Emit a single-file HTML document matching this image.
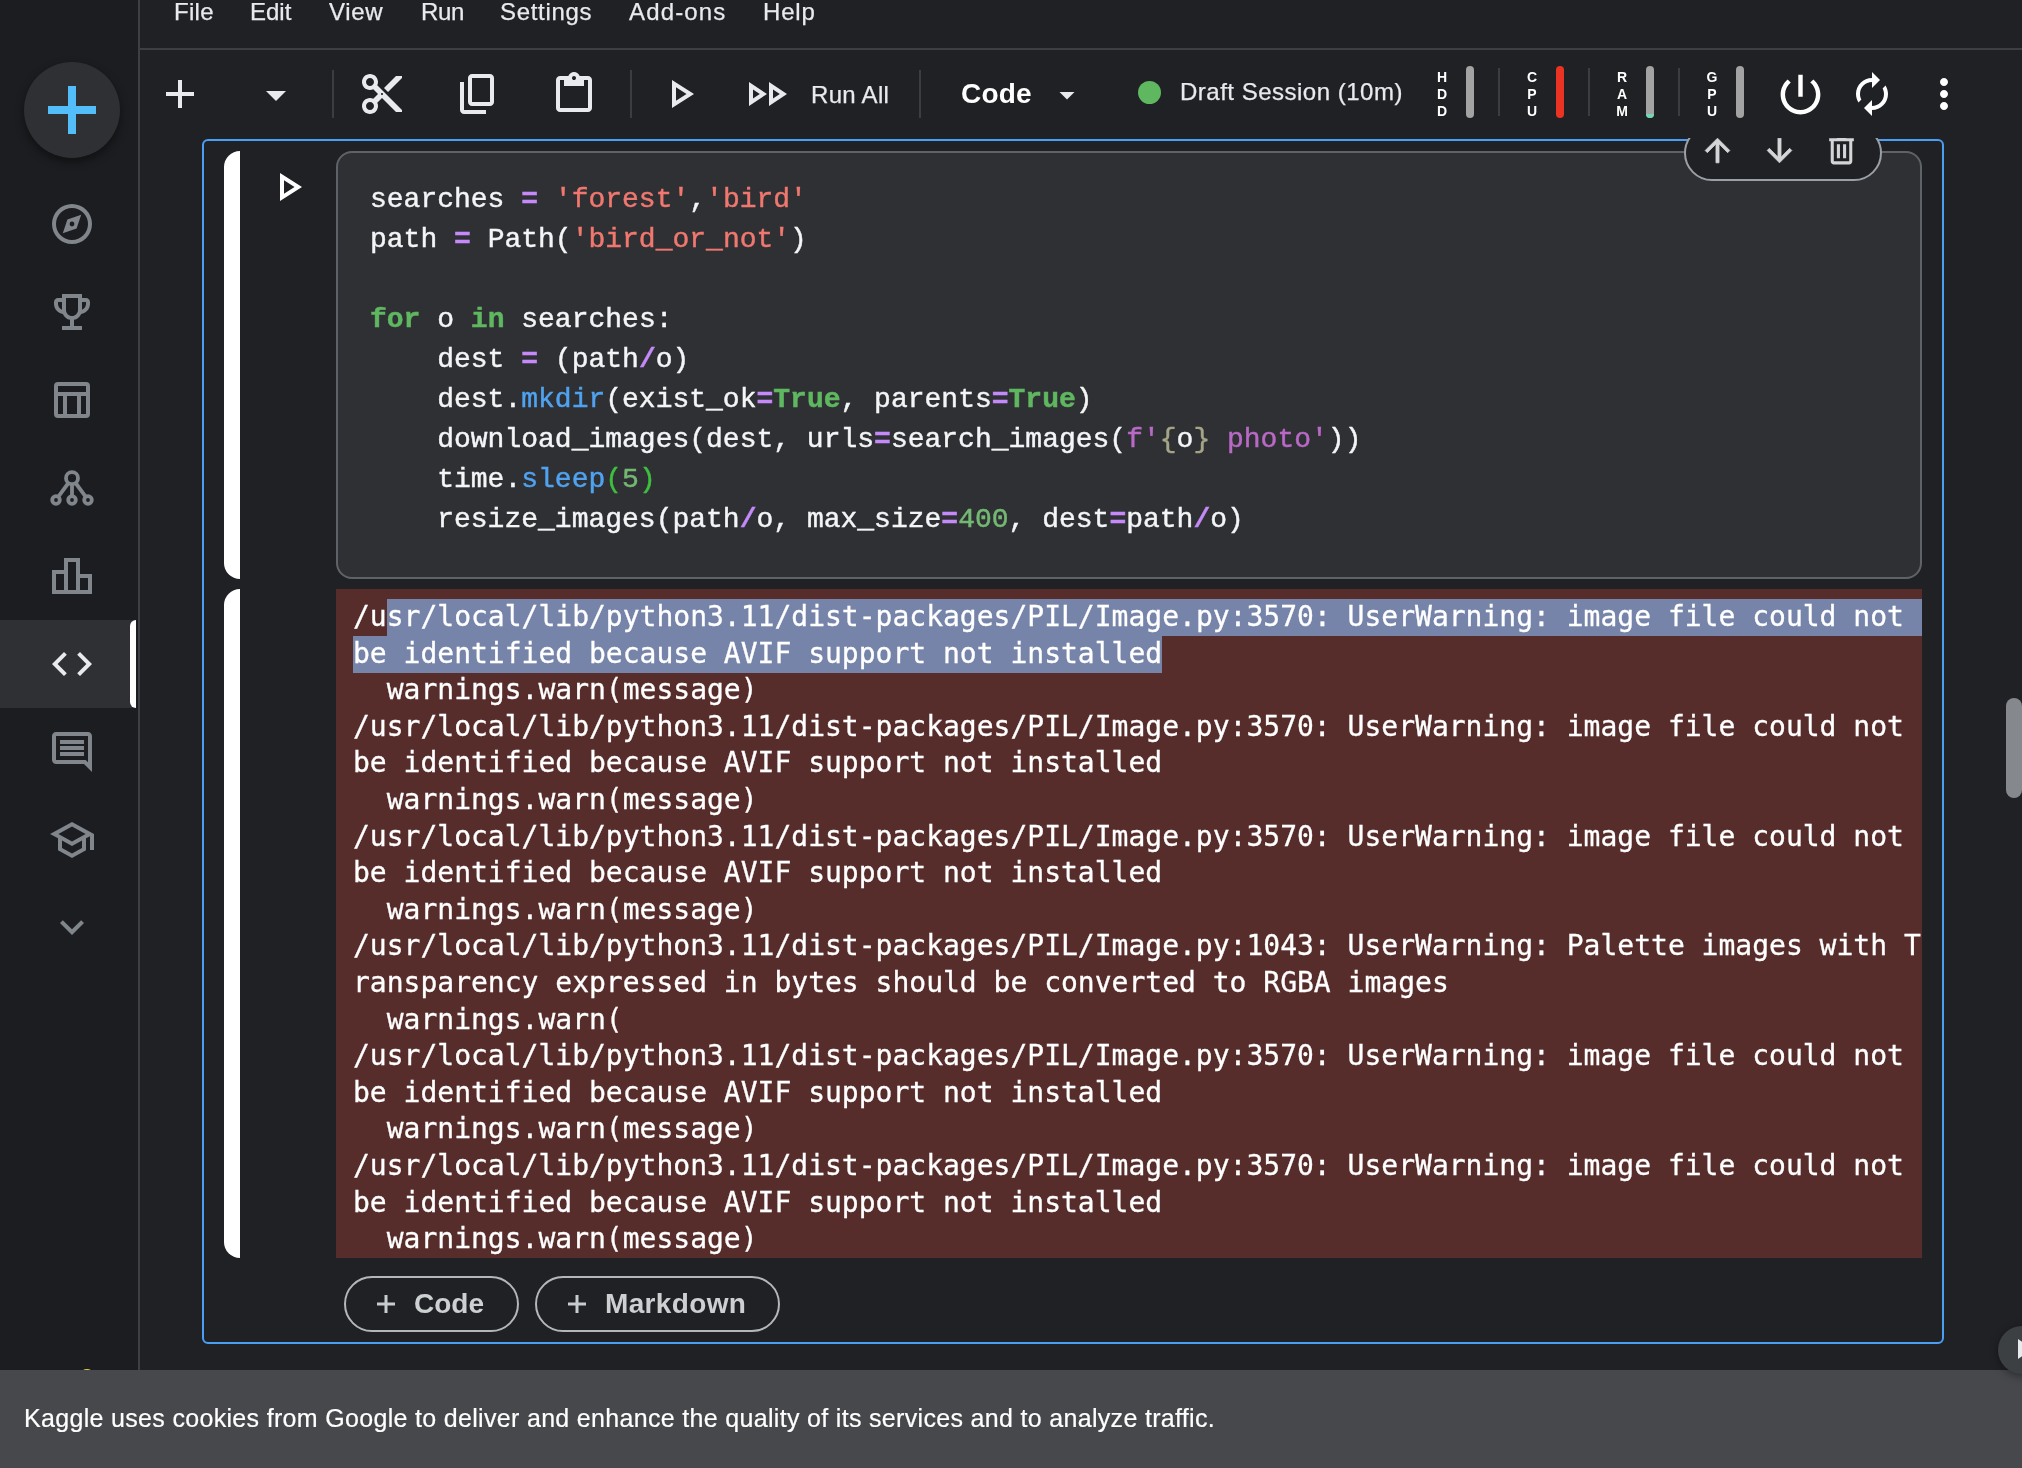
<!DOCTYPE html>
<html lang="en">
<head>
<meta charset="utf-8">
<title>Kaggle Notebook</title>
<style>
*{box-sizing:border-box;margin:0;padding:0}
html,body{width:2022px;height:1468px;overflow:hidden;background:#202124}
body{position:relative;font-family:"Liberation Sans",Arial,sans-serif;color:#e8eaed}
.abs{position:absolute}
.mi,.tx,.res,#code pre,#out pre,#banner span{will-change:transform}
svg{display:block;position:absolute}
/* sidebar */
#side{left:0;top:0;width:140px;height:1468px;background:#1c1d20;border-right:2px solid #3c4043}
#fab{left:24px;top:62px;width:96px;height:96px;border-radius:50%;background:#2f3034;box-shadow:0 4px 10px rgba(0,0,0,.45)}
#fab i{position:absolute;background:#52bdf8}
#active{left:0;top:620px;width:136px;height:88px;background:#2f3034}
#active i{position:absolute;left:130px;top:0;width:6px;height:88px;background:#fff;border-radius:6px 0 0 6px}
.nav{left:48px;width:48px;height:48px;fill:#80868b}
/* menu */
#menu{left:140px;top:0;width:1882px;height:50px;border-bottom:2px solid #3c4043}
.mi{top:-3.500px;font-size:24px;line-height:30px;color:#e8eaed;white-space:nowrap;-webkit-text-stroke:.25px #e8eaed}
/* toolbar */
.tb{fill:#e8eaed}
.sep{width:2px;background:#3c3d41;top:70px;height:48px}
.tx{white-space:nowrap}
.res{font-size:14px;line-height:17px;width:20px;text-align:center;color:#fff;top:69px;font-weight:bold}
.bar{width:8px;height:52px;top:66px;border-radius:4px;background:#a3a3a3;overflow:hidden}
/* cell */
#cell{left:202px;top:139px;width:1742px;height:1205px;border:2px solid #4a9ff5;border-radius:6px}
.wb{left:224px;width:16px;background:#fff;border-radius:16px 0 0 16px}
#code{left:336px;top:151px;width:1586px;height:428px;background:#2f3034;border:2px solid #5f6368;border-radius:16px}
#code pre{position:absolute;left:31.800px;top:26.500px;-webkit-text-stroke:.45px currentColor;font-family:"Liberation Mono","DejaVu Sans Mono",monospace;font-size:28px;line-height:40px;color:#f4f5f6}
.o{color:#c58af9;font-weight:bold}.s{color:#f0786f}.k{color:#5fb760;font-weight:bold}.p{color:#4fa3f0}.n{color:#74b873}.m{color:#3fbf3f}.f{color:#b969c6}.b{color:#a5a587}
#out{left:336px;top:589px;width:1586px;height:669px;background:#562d2b;overflow:hidden}
#out pre{position:absolute;left:17px;top:10px;-webkit-text-stroke:.3px #fff;font-family:"DejaVu Sans Mono","Liberation Mono",monospace;font-size:28px;line-height:36.590px;color:#fff;white-space:pre}
.sel{background:#7684a9;padding:1px 0 3px}
.btn{top:1276px;height:56px;border:2px solid #b4b7ba;border-radius:28px}
/* banner */
#banner{z-index:3;left:0;top:1370px;width:2022px;height:98px;background:#47484b}
#banner span{position:absolute;left:23.500px;top:33px;font-size:25px;line-height:30px;color:#fff;white-space:nowrap;letter-spacing:.32px;-webkit-text-stroke:.2px #fff}
</style>
</head>
<body>
<!-- SIDEBAR -->
<div id="side" class="abs"></div>
<div id="fab" class="abs"><i style="left:24px;top:44px;width:48px;height:8px"></i><i style="left:44px;top:24px;width:8px;height:48px"></i></div>
<div id="active" class="abs"><i></i></div>
<svg class="nav" style="top:200px" viewBox="0 0 24 24"><path fill-rule="evenodd" d="M12 2a10 10 0 1 0 0 20 10 10 0 0 0 0-20zm0 2a8 8 0 1 1 0 16 8 8 0 0 1 0-16zM7.400 16.600L9.700 9.700l6.900-2.300L14.300 14.300zM12 10.800a1.200 1.200 0 1 0 0 2.400 1.200 1.200 0 0 0 0-2.400z"/></svg>
<svg class="nav" style="top:288px" viewBox="0 0 24 24"><path d="M19 5h-2V3H7v2H5c-1.100 0-2 .9-2 2v1c0 2.550 1.920 4.630 4.390 4.940.63 1.500 1.980 2.630 3.610 2.960V19H7v2h10v-2h-4v-3.100c1.630-.33 2.980-1.460 3.610-2.960C19.080 12.630 21 10.550 21 8V7c0-1.100-.9-2-2-2zM5 8V7h2v3.820C5.840 10.400 5 9.300 5 8zm7 6c-1.650 0-3-1.350-3-3V5h6v6c0 1.650-1.350 3-3 3zm7-6c0 1.300-.84 2.400-2 2.820V7h2v1z"/></svg>
<svg class="nav" style="top:376px" viewBox="0 0 24 24"><path fill-rule="evenodd" d="M5 3h14a2 2 0 0 1 2 2v14a2 2 0 0 1-2 2H5a2 2 0 0 1-2-2V5a2 2 0 0 1 2-2zM5 5v3h14V5zM5 10v9h2.500v-9zM9.500 10v9h5v-9zM16.500 10v9H19v-9z"/></svg>
<svg class="nav" style="top:464px;fill:none;stroke:#80868b;stroke-width:1.900" viewBox="0 0 24 24"><circle cx="12" cy="7.100" r="3"/><circle cx="4" cy="18" r="1.900"/><circle cx="12" cy="18" r="1.900"/><circle cx="20" cy="18" r="1.900"/><path d="M10.200 9.500L5.100 16.400M12 10.100v6M13.800 9.500L18.900 16.400"/></svg>
<svg class="nav" style="top:552px" viewBox="0 0 24 24"><path d="M16 11V3H8v6H2v12h20V11h-6zm-6-6h4v14h-4V5zm-6 6h4v8H4v-8zm16 8h-4v-6h4v6z"/></svg>
<svg class="nav" style="top:640px;fill:#e8eaed" viewBox="0 0 24 24"><path d="M9.400 16.600L4.800 12l4.600-4.600L8 6l-6 6 6 6 1.400-1.400zm5.200 0l4.600-4.600-4.600-4.600L16 6l6 6-6 6-1.400-1.400z"/></svg>
<svg class="nav" style="top:728px" viewBox="0 0 24 24"><path d="M21.990 4c0-1.100-.89-2-1.990-2H4c-1.100 0-2 .9-2 2v12c0 1.100.9 2 2 2h14l4 4-.010-18zM20 4v13.170L18.830 16H4V4h16zM6 12h12v2H6zm0-3h12v2H6zm0-3h12v2H6z"/></svg>
<svg class="nav" style="top:816px" viewBox="0 0 24 24"><path d="M12 3L1 9l4 2.180v6L12 21l7-3.820v-6l2-1.090V17h2V9L12 3zm6.820 6L12 12.720 5.180 9 12 5.280 18.820 9zM17 15.990l-5 2.730-5-2.730v-3.720L12 15l5-2.730v3.720z"/></svg>
<svg class="nav" style="top:903px" viewBox="0 0 24 24"><path d="M16.590 8.590L12 13.170 7.410 8.590 6 10l6 6 6-6z"/></svg>
<!-- MENU -->
<div id="menu" class="abs"></div>
<div class="abs mi" style="left:173.500px;letter-spacing:.3px">File</div>
<div class="abs mi" style="left:250px">Edit</div>
<div class="abs mi" style="left:329px;letter-spacing:.7px">View</div>
<div class="abs mi" style="left:420.500px;letter-spacing:-.3px">Run</div>
<div class="abs mi" style="left:499.500px;letter-spacing:.7px">Settings</div>
<div class="abs mi" style="left:629px;letter-spacing:1.150px">Add-ons</div>
<div class="abs mi" style="left:762.500px;letter-spacing:.8px">Help</div>
<!-- TOOLBAR -->
<svg class="tb" style="left:156px;top:70px;width:48px;height:48px" viewBox="0 0 24 24"><path d="M19 13h-6v6h-2v-6H5v-2h6V5h2v6h6v2z"/></svg>
<svg class="tb" style="left:252px;top:71px;width:48px;height:48px" viewBox="0 0 24 24"><path d="M7 10l5 5 5-5z"/></svg>
<div class="abs sep" style="left:332px"></div>
<svg class="tb" style="left:358px;top:70px;width:48px;height:48px" viewBox="0 0 24 24"><path d="M9.640 7.640c.23-.5.36-1.050.36-1.640 0-2.210-1.790-4-4-4S2 3.790 2 6s1.790 4 4 4c.59 0 1.140-.13 1.640-.36L10 12l-2.360 2.360C7.140 14.130 6.590 14 6 14c-2.210 0-4 1.790-4 4s1.790 4 4 4 4-1.790 4-4c0-.59-.13-1.140-.36-1.640L12 14l7 7h3v-1L9.640 7.640zM6 8c-1.100 0-2-.89-2-2s.9-2 2-2 2 .89 2 2-.9 2-2 2zm0 12c-1.100 0-2-.89-2-2s.9-2 2-2 2 .89 2 2-.9 2-2 2zm6-7.500c-.28 0-.5-.22-.5-.5s.22-.5.5-.5.5.22.5.5-.22.5-.5.5zM19 3l-6 6 2 2 7-7V3h-3z"/></svg>
<svg class="tb" style="left:454px;top:70px;width:48px;height:48px" viewBox="0 -960 960 960"><path d="M360-240q-33 0-56.500-23.500T280-320v-480q0-33 23.500-56.500T360-880h360q33 0 56.500 23.500T800-800v480q0 33-23.500 56.500T720-240H360Zm0-80h360v-480H360v480ZM200-80q-33 0-56.500-23.500T120-160v-560h80v560h440v80H200Z"/></svg>
<svg class="tb" style="left:550px;top:70px;width:48px;height:48px" viewBox="0 -960 960 960"><path d="M200-120q-33 0-56.500-23.500T120-200v-560q0-33 23.500-56.500T200-840h167q11-35 43-57.500t70-22.500q40 0 71.500 22.500T594-840h166q33 0 56.500 23.500T840-760v560q0 33-23.500 56.500T760-120H200Zm0-80h560v-560h-80v120H280v-120h-80v560Zm280-560q17 0 28.500-11.500T520-800q0-17-11.500-28.500T480-840q-17 0-28.500 11.500T440-800q0 17 11.500 28.500T480-760Z"/></svg>
<div class="abs sep" style="left:630px"></div>
<svg class="tb" style="left:656px;top:70px;width:48px;height:48px" viewBox="0 0 24 24"><path fill-rule="evenodd" d="M8 5v14l11-7zM10 8.640L15.270 12 10 15.360z"/></svg>
<svg class="tb" style="left:744px;top:70px;width:48px;height:48px" viewBox="0 0 24 24"><path fill-rule="evenodd" d="M2.500 6v12l9-6zM4.500 9.750L7.900 12 4.500 14.250zM12.500 6v12l9-6zM14.500 9.750L17.900 12 14.500 14.250z"/></svg>
<div class="abs tx" style="left:810.500px;top:80px;font-size:24px;line-height:30px;letter-spacing:.3px;-webkit-text-stroke:.25px #e8eaed">Run All</div>
<div class="abs sep" style="left:919px"></div>
<div class="abs tx" style="left:960.500px;top:76px;font-size:28px;line-height:36px;font-weight:bold;color:#fff;letter-spacing:.2px">Code</div>
<svg class="tb" style="left:1049px;top:77px;width:36px;height:36px" viewBox="0 0 24 24"><path d="M7 10l5 5 5-5z"/></svg>
<div class="abs" style="left:1138px;top:81px;width:23px;height:23px;border-radius:50%;background:#5fb760"></div>
<div class="abs tx" style="left:1179.500px;top:77px;font-size:24px;line-height:30px;letter-spacing:.5px;-webkit-text-stroke:.25px #e8eaed">Draft Session (10m)</div>
<div class="abs res" style="left:1432px">H<br>D<br>D</div>
<div class="abs bar" style="left:1466px;background:#a3a3a3"></div>
<div class="abs res" style="left:1522px">C<br>P<br>U</div>
<div class="abs bar" style="left:1556px;background:#ea3323"></div>
<div class="abs res" style="left:1612px">R<br>A<br>M</div>
<div class="abs bar" style="left:1646px;background:#a3a3a3"><i style="position:absolute;left:0;bottom:0;width:8px;height:4px;background:#6fd9b4"></i></div>
<div class="abs res" style="left:1702px">G<br>P<br>U</div>
<div class="abs bar" style="left:1736px;background:#a3a3a3"></div>
<div class="abs sep" style="left:1498px;top:68px"></div>
<div class="abs sep" style="left:1588px;top:68px"></div>
<div class="abs sep" style="left:1678px;top:68px"></div>
<svg class="tb" style="fill:#fff;left:1773.5px;top:67.5px;width:53px;height:53px" viewBox="0 0 24 24"><path d="M13 3h-2v10h2V3zm4.830 2.170l-1.420 1.420C17.990 7.860 19 9.810 19 12c0 3.870-3.130 7-7 7s-7-3.130-7-7c0-2.190 1.010-4.140 2.580-5.420L6.170 5.170C4.230 6.820 3 9.260 3 12c0 4.970 4.030 9 9 9s9-4.030 9-9c0-2.740-1.230-5.180-3.170-6.830z"/></svg>
<svg class="tb" style="fill:#fff;left:1848px;top:70px;width:48px;height:48px" viewBox="0 0 24 24"><path d="M12 6v3l4-4-4-4v3c-4.420 0-8 3.580-8 8 0 1.570.46 3.030 1.240 4.260L6.700 14.800c-.45-.83-.7-1.790-.7-2.800 0-3.310 2.690-6 6-6zm6.760 1.740L17.300 9.200c.44.84.7 1.790.7 2.800 0 3.310-2.690 6-6 6v-3l-4 4 4 4v-3c4.420 0 8-3.580 8-8 0-1.570-.46-3.030-1.240-4.260z"/></svg>
<svg class="tb" style="fill:#fff;left:1920px;top:70px;width:48px;height:48px" viewBox="0 0 24 24"><path d="M12 8c1.100 0 2-.9 2-2s-.9-2-2-2-2 .9-2 2 .9 2 2 2zm0 2c-1.100 0-2 .9-2 2s.9 2 2 2 2-.9 2-2-.9-2-2-2zm0 6c-1.100 0-2 .9-2 2s.9 2 2 2 2-.9 2-2-.9-2-2-2z"/></svg>
<!-- CELL -->
<div id="cell" class="abs"></div>
<div class="abs wb" style="top:151px;height:428px"></div>
<div class="abs wb" style="top:589px;height:669px"></div>
<div id="code" class="abs"><pre>searches <span class="o">=</span> <span class="s">'forest'</span>,<span class="s">'bird'</span>
path <span class="o">=</span> Path(<span class="s">'bird_or_not'</span>)

<span class="k">for</span> o <span class="k">in</span> searches:
    dest <span class="o">=</span> (path<span class="o">/</span>o)
    dest.<span class="p">mkdir</span>(exist_ok<span class="o">=</span><span class="k">True</span>, parents<span class="o">=</span><span class="k">True</span>)
    download_images(dest, urls<span class="o">=</span>search_images(<span class="f">f'</span><span class="b">{</span>o<span class="b">}</span><span class="f"> photo'</span>))
    time.<span class="p">sleep</span><span class="m">(</span><span class="n">5</span><span class="m">)</span>
    resize_images(path<span class="o">/</span>o, max_size<span class="o">=</span><span class="n">400</span>, dest<span class="o">=</span>path<span class="o">/</span>o)</pre></div>
<div id="out" class="abs"><pre>/u<span class="sel">sr/local/lib/python3.11/dist-packages/PIL/Image.py:3570: UserWarning: image file could not  </span>
<span class="sel">be identified because AVIF support not installed</span>
  warnings.warn(message)
/usr/local/lib/python3.11/dist-packages/PIL/Image.py:3570: UserWarning: image file could not
be identified because AVIF support not installed
  warnings.warn(message)
/usr/local/lib/python3.11/dist-packages/PIL/Image.py:3570: UserWarning: image file could not
be identified because AVIF support not installed
  warnings.warn(message)
/usr/local/lib/python3.11/dist-packages/PIL/Image.py:1043: UserWarning: Palette images with T
ransparency expressed in bytes should be converted to RGBA images
  warnings.warn(
/usr/local/lib/python3.11/dist-packages/PIL/Image.py:3570: UserWarning: image file could not
be identified because AVIF support not installed
  warnings.warn(message)
/usr/local/lib/python3.11/dist-packages/PIL/Image.py:3570: UserWarning: image file could not
be identified because AVIF support not installed
  warnings.warn(message)</pre></div>
<div class="abs" style="left:1684px;top:138px;width:198px;height:44px;overflow:hidden;z-index:2">
<div class="abs" style="left:0;top:-13px;width:198px;height:56px;border:2px solid #9aa0a6;border-radius:28px;background:#202124"></div>
<svg style="left:14.5px;top:-6.5px;width:37px;height:37px;fill:#d3d5d6;stroke:#d3d5d6;stroke-width:.5" viewBox="0 0 24 24"><path fill-rule="evenodd" d="M4 12l1.410 1.410L11 7.830V20h2V7.830l5.580 5.590L20 12l-8-8-8 8z"/></svg>
<svg style="left:76.5px;top:-6.5px;width:37px;height:37px;fill:#d3d5d6;stroke:#d3d5d6;stroke-width:.5" viewBox="0 0 24 24"><path fill-rule="evenodd" d="M20 12l-1.410-1.410L13 16.170V4h-2v12.170l-5.580-5.590L4 12l8 8 8-8z"/></svg>
<svg style="left:138.500px;top:-6px;width:37px;height:37px;fill:#d3d5d6" viewBox="0 -960 960 960"><path fill-rule="evenodd" d="M280-120q-33 0-56.500-23.500T200-200v-520h-40v-80h200v-40h240v40h200v80h-40v520q0 33-23.500 56.500T680-120H280Zm400-600H280v520h400v-520ZM360-280h80v-360h-80v360Zm160 0h80v-360h-80v360Z"/></svg>
</div>
<svg style="left:264px;top:163px;width:48px;height:48px;fill:#fff" viewBox="0 0 24 24"><path fill-rule="evenodd" d="M8 5v14l11-7zM10 8.640L15.270 12 10 15.360z"/></svg>
<div class="abs btn" style="left:344px;width:175px"></div><svg style="left:377px;top:1294.500px;width:18px;height:18px" viewBox="0 0 18 18"><path d="M0 7.500h7.500V0h3v7.500H18v3h-7.500V18h-3v-7.500H0z" fill="#c9cccf"/></svg><div class="abs tx bt" style="left:414px;top:1286px;font-size:28px;line-height:36px;color:#cdd0d0;font-weight:bold">Code</div>
<div class="abs btn" style="left:535px;width:245px"></div><svg style="left:568px;top:1294.500px;width:18px;height:18px" viewBox="0 0 18 18"><path d="M0 7.500h7.500V0h3v7.500H18v3h-7.500V18h-3v-7.500H0z" fill="#c9cccf"/></svg><div class="abs tx bt" style="left:605px;top:1286px;font-size:28px;line-height:36px;color:#cdd0d0;font-weight:bold;letter-spacing:.35px">Markdown</div>
<div class="abs" style="left:2006px;top:698px;width:16px;height:100px;border-radius:8px;background:#85898d"></div>
<div class="abs" style="left:1998px;top:1326px;width:48px;height:48px;border-radius:50%;background:#3c4043;z-index:5;box-shadow:0 2px 8px rgba(0,0,0,.4)"></div>
<svg style="left:2018px;top:1339px;width:14px;height:20px;z-index:6" viewBox="0 0 14 20"><path d="M0 0l14 10L0 20z" fill="#e8eaed"/></svg>
<div class="abs" style="left:82.500px;top:1368.700px;width:8px;height:4px;border-radius:4px/2px;background:#ecd34b"></div>
<!-- BANNER -->
<div id="banner" class="abs"><span>Kaggle uses cookies from Google to deliver and enhance the quality of its services and to analyze traffic.</span></div>
</body>
</html>
